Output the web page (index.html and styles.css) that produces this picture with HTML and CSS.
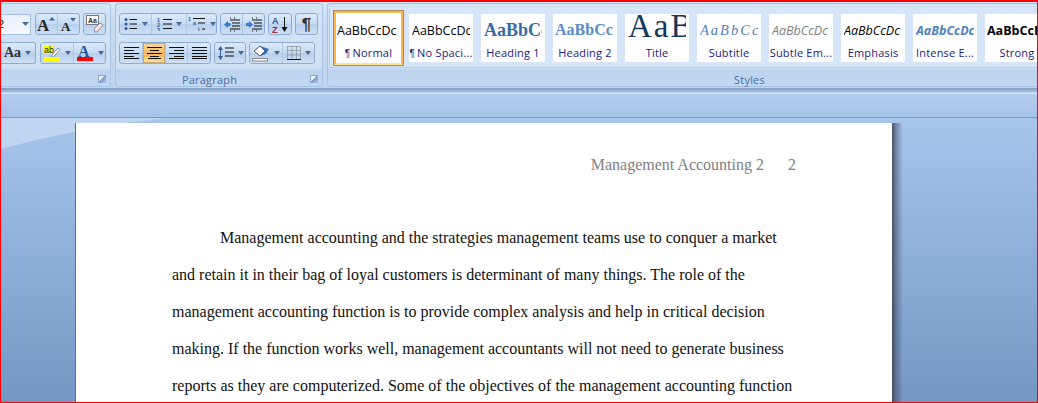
FILE: index.html
```html
<!DOCTYPE html>
<html lang="en">
<head>
<meta charset="utf-8">
<title>Management Accounting</title>
<link rel="stylesheet" href="styles.css">
</head>
<body>
<div class="window">
  <div class="ribbon">
    <section class="group font-group">
      <div class="rows">
        <div class="row">
          <div class="size-box"><span class="size-val">12</span><svg width="7" height="4" class="drop"><path d="M0 0h7L3.5 4z" fill="#4a6a9a"/></svg></div>
          <div class="btns">
            <span class="cell w22"><svg width="20" height="17" viewBox="0 0 20 17"><text x="0" y="15" class="big-a">A</text><path d="M12 4.500 15 1l3 3.500z" fill="#3d66a0"/></svg></span>
            <span class="cell w21"><svg width="17" height="15" viewBox="0 0 17 15"><text x="1" y="14" class="small-a">A</text><path d="M10 1h6l-3 3.500z" fill="#3d66a0"/></svg></span>
          </div>
          <div class="btns"><span class="cell w21"><svg width="18" height="18" viewBox="0 0 18 18"><rect x=".5" y=".5" width="12" height="9" fill="#fff" stroke="#777"/><text x="2" y="8" class="mini">Aa</text><path d="M8 14l6-6 3 2-6 7H9z" fill="#f5e6ea" stroke="#8a8a9a"/></svg></span></div>
        </div>
        <div class="row">
          <div class="btns aa"><span class="cell w35"><span class="aa-text">Aa</span><svg width="6" height="4" class="drop"><path d="M0 0h6L3 4z" fill="#4a6a9a"/></svg></span></div>
          <div class="btns">
            <span class="cell w33"><svg width="18" height="18" viewBox="0 0 18 18"><rect x="1" y="1" width="9" height="9" fill="#ff0"/><text x="1" y="8.500" class="mini2">ab</text><path d="M9 11l6-7 2 1.500-6 7-3 1z" fill="#fff" stroke="#7d8ea8"/><rect x="1" y="13" width="16" height="4" fill="#ff0"/></svg><svg width="6" height="4" class="drop"><path d="M0 0h6L3 4z" fill="#4a6a9a"/></svg></span>
            <span class="cell w31"><svg width="18" height="18" viewBox="0 0 18 18"><text x="2" y="12.500" class="color-a">A</text><rect x="1" y="13" width="16" height="4" fill="#f00"/></svg><svg width="6" height="4" class="drop"><path d="M0 0h6L3 4z" fill="#4a6a9a"/></svg></span>
          </div>
        </div>
      </div>
      <div class="group-label"><span class="launcher"></span></div>
    </section>

    <section class="group para-group">
      <div class="rows">
        <div class="row">
          <div class="btns">
            <span class="cell w32"><svg width="14" height="14" viewBox="0 0 14 14"><g fill="#2e5a9e"><circle cx="2" cy="2.500" r="1.500"/><circle cx="2" cy="7" r="1.500"/><circle cx="2" cy="11.500" r="1.500"/></g><path d="M5.500 2.500H13M5.500 7H13M5.500 11.500H13" stroke="#111"/></svg><svg width="6" height="4" class="drop"><path d="M0 0h6L3 4z" fill="#4a6a9a"/></svg></span>
            <span class="cell w35"><svg width="15" height="14" viewBox="0 0 15 14"><g class="num"><text x="0" y="5">1</text><text x="0" y="10">2</text><text x="0" y="14.500">3</text></g><path d="M6 2.500h9M6 7h9M6 11.500h9" stroke="#111"/></svg><svg width="6" height="4" class="drop"><path d="M0 0h6L3 4z" fill="#4a6a9a"/></svg></span>
            <span class="cell w29"><svg width="18" height="16" viewBox="0 0 18 16"><g class="num"><text x="0" y="5">1</text><text x="5" y="9">a</text><text x="10" y="15">i</text></g><path d="M5 2.500h12M10 7h7M14 13h3" stroke="#111"/></svg><svg width="6" height="4" class="drop"><path d="M0 0h6L3 4z" fill="#4a6a9a"/></svg></span>
          </div>
          <div class="btns">
            <span class="cell w22"><svg width="16" height="15" viewBox="0 0 16 15"><path d="M6 3h10M8 6h8M8 9h8M6 12h10M6 1h1M6 14h1M10 1h1M10 14h1" stroke="#111"/><path d="M0 7.500 4 4v2h2.500v3H4v2z" fill="#3a78d0"/></svg></span>
            <span class="cell w21"><svg width="16" height="15" viewBox="0 0 16 15"><path d="M6 3h10M8 6h8M8 9h8M6 12h10M6 1h1M6 14h1M10 1h1M10 14h1" stroke="#111"/><path d="M7 7.500 3 4v2H0v3h3v2z" fill="#3a78d0"/></svg></span>
          </div>
          <div class="btns"><span class="cell w22"><svg width="18" height="17" viewBox="0 0 18 17"><text x="1" y="8" class="sort-a">A</text><text x="1" y="16.500" class="sort-z">Z</text><path d="M13.500 1v13" stroke="#111"/><path d="M10.500 11h6l-3 5z" fill="#111"/></svg></span></div>
          <div class="btns"><span class="cell w21"><span class="pilcrow">¶</span></span></div>
        </div>
        <div class="row row-second">
          <div class="btns">
            <span class="cell w23"><svg width="15" height="12" viewBox="0 0 15 12"><path d="M0 .5h15M0 3.500h10M0 6.500h15M0 9.500h10M0 11.500h15" stroke="#111"/></svg></span>
            <span class="cell w23 active"><svg width="15" height="12" viewBox="0 0 15 12"><path d="M0 .5h15M3 3.500h9M0 6.500h15M3 9.500h9M1 11.500h13" stroke="#111"/></svg></span>
            <span class="cell w22"><svg width="15" height="12" viewBox="0 0 15 12"><path d="M0 .5h15M5 3.500h10M0 6.500h15M5 9.500h10M0 11.500h15" stroke="#111"/></svg></span>
            <span class="cell w22"><svg width="15" height="12" viewBox="0 0 15 12"><path d="M0 .5h15M0 3.500h15M0 6.500h15M0 9.500h15M0 11.500h15" stroke="#111"/></svg></span>
          </div>
          <div class="btns"><span class="cell w30"><svg width="17" height="16" viewBox="0 0 17 16"><path d="M3.500 3v10" stroke="#2e5a9e"/><path d="M1 5l2.500-4L6 5zM1 11l2.500 4L6 11z" fill="#2e5a9e"/><path d="M8 3h9M8 7h9M8 11h9" stroke="#111"/></svg><svg width="6" height="4" class="drop"><path d="M0 0h6L3 4z" fill="#4a6a9a"/></svg></span></div>
          <div class="btns">
            <span class="cell w33"><svg width="18" height="18" viewBox="0 0 18 18"><path d="M2 7l6-5 5 5-5 5z" fill="#fff" stroke="#555"/><path d="M8 2l5 5-5 5 6-2 3-5z" fill="#3a6db0"/><rect x=".5" y="14.500" width="15" height="2.500" fill="#fff" stroke="#888"/></svg><svg width="6" height="4" class="drop"><path d="M0 0h6L3 4z" fill="#4a6a9a"/></svg></span>
            <span class="cell w31"><svg width="14" height="14" viewBox="0 0 14 14"><path d="M.5 .5h13v13M.5 .5v13M.5 4.500h13M.5 9h13M5 .5v13M9.500 .5v13" stroke="#777" stroke-dasharray="1 1" fill="none"/><path d="M0 13.500h14" stroke="#111"/></svg><svg width="6" height="4" class="drop"><path d="M0 0h6L3 4z" fill="#4a6a9a"/></svg></span>
          </div>
        </div>
      </div>
      <div class="group-label para-label"><span class="label-text">Paragraph</span><span class="launcher"></span></div>
    </section>

    <section class="group style-group">
      <div class="gallery">
        <div class="style selected"><span class="pv pv-normal">AaBbCcDc</span><span class="nm"><span class="pil">¶</span> Normal</span></div>
        <div class="style"><span class="pv pv-normal">AaBbCcDc</span><span class="nm"><span class="pil">¶</span> No Spaci...</span></div>
        <div class="style"><span class="pv pv-h1">AaBbCc</span><span class="nm">Heading 1</span></div>
        <div class="style"><span class="pv pv-h2">AaBbCc</span><span class="nm">Heading 2</span></div>
        <div class="style"><span class="pv pv-title">AaB</span><span class="nm">Title</span></div>
        <div class="style"><span class="pv pv-sub">AaBbCc.</span><span class="nm">Subtitle</span></div>
        <div class="style"><span class="pv pv-sem">AaBbCcDc</span><span class="nm">Subtle Em...</span></div>
        <div class="style"><span class="pv pv-em">AaBbCcDc</span><span class="nm">Emphasis</span></div>
        <div class="style"><span class="pv pv-iem">AaBbCcDc</span><span class="nm">Intense E...</span></div>
        <div class="style"><span class="pv pv-strong">AaBbCcDc</span><span class="nm">Strong</span></div>
      </div>
      <div class="group-label style-label"><span class="label-text">Styles</span></div>
    </section>
  </div>
  <div class="ribbon-edge"></div>
  <div class="band"></div>
  <div class="workspace">
    <svg class="swoosh" width="180" height="36" viewBox="0 0 180 36" aria-hidden="true"><path d="M0 0H170C120 4 60 15 0 31z" fill="#c0d5f0"/></svg>
    <main class="page">
      <header class="page-head">Management Accounting 2<span class="page-no">2</span></header>
      <p class="line first">Management accounting and the strategies management teams use to conquer a market</p>
      <p class="line">and retain it in their bag of loyal customers is determinant of many things. The role of the</p>
      <p class="line">management accounting function is to provide complex analysis and help in critical decision</p>
      <p class="line">making. If the function works well, management accountants will not need to generate business</p>
      <p class="line">reports as they are computerized. Some of the objectives of the management accounting function</p>
    </main>
  </div>
</div>
</body>
</html>
```
FILE: styles.css
```css
* { box-sizing: border-box; }
html, body { margin: 0; padding: 0; }
body { width: 1038px; height: 403px; overflow: hidden; font-family: "Liberation Sans", sans-serif; }
.window {
  width: 1038px; height: 403px; border: 1px solid #f00; border-top-width: 2px;
  display: flex; flex-direction: column; overflow: hidden;
  background: #bed3ee;
}
.ribbon {
  height: 86px; flex: none; display: flex; gap: 4px; align-items: flex-start;
  background: linear-gradient(#dbe8f8 0, #c9dcf2 20%, #bfd5ee 100%);
  padding: 1px 0 0;
  overflow: hidden;
}
.group {
  display: flex; flex-direction: column; height: 84px; flex: none;
  border: 1px solid #a9c3e2; border-radius: 3px;
  background: linear-gradient(#d3e3f6 0, #cfe0f5 78%, #bcd3ee 81%, #c3d8f0 100%);
}
.font-group { width: 110px; border-left: 0; border-radius: 0 3px 3px 0; }
.para-group { width: 208px; }
.style-group { width: 844px; border-right: 0; border-radius: 3px 0 0 3px; }
.rows { display: flex; flex-direction: column; gap: 7px; padding-top: 9px; height: 60px; flex: none; }
.para-group .rows { padding-left: 3px; }
.row { display: flex; gap: 3px; align-items: center; height: 22px; flex: none; }
.font-group .row { justify-content: flex-end; padding-right: 4px; }
.font-group .row + .row { gap: 4px; }
.size-box {
  width: 30px; height: 21px; margin-right: 1px; display: flex; align-items: center; justify-content: flex-start;
  overflow: hidden; padding-left: 0;
  background: linear-gradient(#e9f1fb, #f4f8fd); border: 1px solid #a5bfdf; border-left: 0; font-size: 11px;
}
.size-val { margin-left: -9px; color: #222; flex: none; width: 30px; }
.btns {
  display: flex; height: 22px; flex: none; border: 1px solid #8eabd0; border-radius: 3px;
  background: linear-gradient(#dce9f9 0, #c6daf3 50%, #b8cfec 52%, #cddff5 100%);
}
.aa { border-left: 0; border-radius: 0 3px 3px 0; }
.cell {
  display: flex; align-items: center; justify-content: center; gap: 4px; height: 100%;
  border-right: 1px solid #afc6e4; flex: none;
}
.cell:last-child { border-right: 0; }
.active { background: linear-gradient(#fcd9a0 0, #fbbf62 45%, #fdb24c 50%, #fde29a 100%); box-shadow: inset 0 0 0 1px #c8a97a; }
.w21 { width: 21px; } .w22 { width: 22px; } .w23 { width: 23px; } .w29 { width: 29px; } .w30 { width: 30px; }
.w31 { width: 31px; } .w32 { width: 32px; } .w33 { width: 33px; } .w35 { width: 35px; }
.drop { flex: none; }
.big-a { font: bold 17px "Liberation Serif", serif; fill: #222; }
.small-a { font: bold 13px "Liberation Serif", serif; fill: #222; }
.color-a { font: bold 16px "Liberation Serif", serif; fill: #2e5597; }
.mini { font: bold 7px "Liberation Sans", sans-serif; fill: #333; }
.mini2 { font: 9px "Liberation Sans", sans-serif; fill: #222; }
.num text { font: bold 5.500px "Liberation Sans", sans-serif; fill: #2e5a9e; }
.sort-a { font: bold 9px "Liberation Sans", sans-serif; fill: #2e5a9e; }
.sort-z { font: bold 9px "Liberation Sans", sans-serif; fill: #8a2f2f; }
.aa-text { font: bold 14px "Liberation Serif", serif; color: #333; }
.pilcrow { font: bold 17px "Liberation Sans", sans-serif; color: #333; line-height: 1; }
.group-label {
  height: 22px; flex: none; display: flex; align-items: center; justify-content: center; position: relative;
  padding-top: 8px;
  font-size: 11px; color: #4a6ca8; font-family: "Open Sans", sans-serif;
}
.para-label { padding-right: 19px; }
.label-text { letter-spacing: .2px; }
.launcher {
  position: absolute; right: 4px; top: 11px; width: 8px; height: 8px;
  border: 1px solid #8fa8c8; border-width: 1px 0 0 1px; background: linear-gradient(135deg, #e8f0fa 40%, #7f9fc8 41%, #a9c2e2);
}
.gallery {
  margin: 4px 0 0 1px; height: 60px; flex: none; display: flex; gap: 8px; align-items: flex-start;
  padding: 6px 0 0 5px; background: #d6e5f7; border-bottom: 1px solid #b4cce8; border-left: 1px solid #b4cce8; overflow: hidden;
}
.style {
  width: 64px; height: 48px; flex: none; background: #fff; display: flex; flex-direction: column;
  align-items: center; overflow: hidden;
}
.selected {
  width: 71px; height: 56px; margin: -4px -3px 0 -2px; border: 3px solid #fbb74b; outline: 1px solid #a58660; outline-offset: -1px;
  border-bottom-color: #fde58d;
}
.pv {
  height: 29px; width: 58px; flex: none; display: block; overflow: hidden; white-space: nowrap; text-align: left; line-height: 33px;
  font-family: "Open Sans", sans-serif; font-size: 12.500px; color: #000;
}
.selected .pv { margin-top: 1px; width: 60px; margin-left: -3px; }
.pv-h1 { font: bold 18px/32px "Liberation Serif", serif; color: #3a6aa5; }
.pv-h2 { font: bold 16px/32px "Liberation Serif", serif; color: #5b8ac4; width: 60px; }
.pv-title { font: 33px/24px "Liberation Serif", serif; color: #17365d; letter-spacing: 2px; }
.pv-sub { font: italic 14.500px/32px "Liberation Serif", serif; color: #4f81bd; letter-spacing: 2px; }
.pv-sem { font-style: italic; color: #808080; }
.pv-em { font-style: italic; }
.pv-iem { font-style: italic; font-weight: 700; color: #4f81bd; }
.pv-strong { font-weight: 700; width: 60px; }
.nm {
  font: 11px/19px "Open Sans", sans-serif; letter-spacing: .2px; color: #1a1a7c; white-space: nowrap;
}
.pil { font: 10px "Liberation Sans", sans-serif; margin-right: -1px; }
.style-label { height: 18px; padding-top: 4px; }
.ribbon-edge { height: 6px; flex: none; background: linear-gradient(#7f9fc5 0, #9ab6da 50%, #a9c4e6 70%, #e5eefa 85%, #c9dcf3 100%); }
.band { height: 24px; flex: none; background: linear-gradient(#b3cdee, #a7c3e9); border-bottom: 1px solid #7e9cc3; }
.workspace {
  flex: 1; min-height: 0; position: relative; overflow: hidden;
  background: linear-gradient(#a8c5ec 0, #95b4e0 35%, #7597c5 100%);
  padding: 5px 0 0 75px;
}
.swoosh { position: absolute; left: 0; top: 0; }
.page {
  position: relative; width: 816px; height: 400px; background: #fff;
  box-shadow: -1px 0 0 #5d6f8a;
  padding: 33px 96px 0;
  font-family: "Liberation Serif", serif; font-size: 16px; color: #111;
}
.page::after {
  content: ""; position: absolute; left: 100%; top: 0; bottom: 0; width: 11px;
  background: linear-gradient(90deg, rgba(60,70,90,.9) 0, rgba(60,70,90,.5) 35%, rgba(60,70,90,0) 100%);
}
.page-head {
  display: flex; justify-content: flex-end; gap: 24px; color: #808080; line-height: 18px; margin: 0 0 55px;
}
.line { margin: 0 0 19px; line-height: 18px; white-space: nowrap; }
.first { padding-left: 48px; }
```
